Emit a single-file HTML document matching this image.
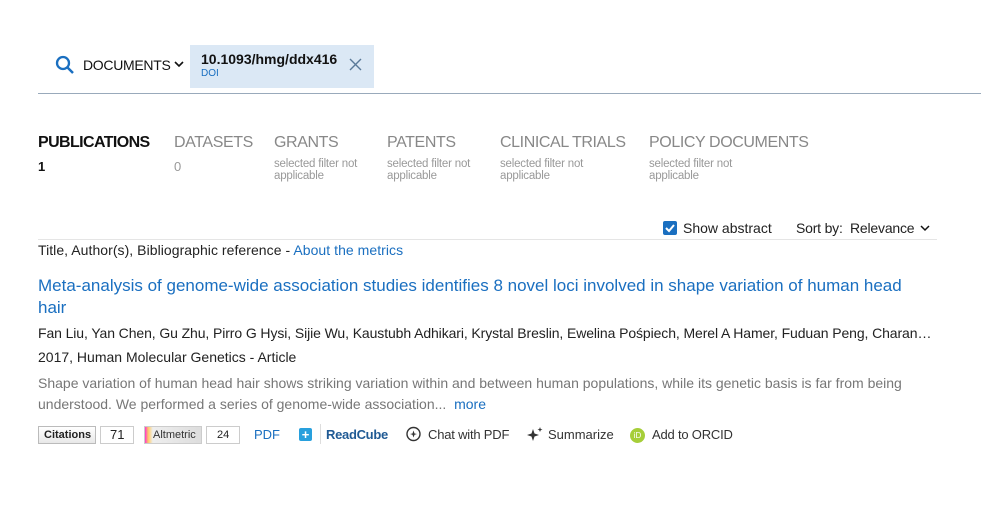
<!DOCTYPE html>
<html><head><meta charset="utf-8"><style>
*{margin:0;padding:0;box-sizing:border-box}
body{width:981px;height:505px;background:#fff;font-family:"Liberation Sans",sans-serif;color:#222;position:relative;overflow:hidden}
.a{position:absolute;white-space:nowrap}
.tab .t{font-size:16px;color:#888;letter-spacing:-0.4px}
.tab .n{font-size:13px;color:#999;margin-top:7px}
.tab .s{font-size:11.5px;color:#999;line-height:12px;margin-top:6px;letter-spacing:-0.2px}
.blue{color:#1a6fc0}
.ic{font-size:13px;color:#333}
</style></head><body>
<svg class="a" style="left:55px;top:55px" width="20" height="20" viewBox="0 0 20 20"><circle cx="8" cy="8" r="6" fill="none" stroke="#1a6fc0" stroke-width="2.3"/><line x1="12.5" y1="12.5" x2="18" y2="18" stroke="#1a6fc0" stroke-width="2.5"/></svg>
<div class="a" style="left:83px;top:57px;font-size:14px;color:#111;letter-spacing:-0.3px">DOCUMENTS</div>
<svg class="a" style="left:173px;top:60px" width="12" height="8"><path d="M2 2 L6 6 L10 2" fill="none" stroke="#111" stroke-width="1.6"/></svg>
<div class="a" style="left:190px;top:45px;width:184px;height:43px;background:#dbe8f5"></div>
<div class="a" style="left:201px;top:51px;font-size:14px;font-weight:bold;color:#111">10.1093/hmg/ddx416</div>
<div class="a" style="left:201px;top:68px;font-size:10px;color:#1a6fc0">DOI</div>
<svg class="a" style="left:349px;top:58px" width="13" height="13"><path d="M1 1L12 12M12 1L1 12" stroke="#5a7a99" stroke-width="1.4"/></svg>
<div class="a" style="left:38px;top:93px;width:943px;height:1px;background:#9ab"></div>

<div class="a tab" style="left:38px;top:134px"><div class="t" style="color:#111;font-weight:bold;letter-spacing:-0.6px">PUBLICATIONS</div><div class="n" style="color:#111;font-weight:bold">1</div></div>
<div class="a tab" style="left:174px;top:134px"><div class="t">DATASETS</div><div class="n">0</div></div>
<div class="a tab" style="left:274px;top:134px"><div class="t">GRANTS</div><div class="s">selected filter not<br>applicable</div></div>
<div class="a tab" style="left:387px;top:134px"><div class="t">PATENTS</div><div class="s">selected filter not<br>applicable</div></div>
<div class="a tab" style="left:500px;top:134px"><div class="t">CLINICAL TRIALS</div><div class="s">selected filter not<br>applicable</div></div>
<div class="a tab" style="left:649px;top:134px"><div class="t">POLICY DOCUMENTS</div><div class="s">selected filter not<br>applicable</div></div>

<div class="a" style="left:663px;top:221px;width:14px;height:14px;background:#1a6fc0;border-radius:2px"></div>
<svg class="a" style="left:663px;top:221px" width="14" height="14"><path d="M3 7L6 10L11 4" fill="none" stroke="#fff" stroke-width="2"/></svg>
<div class="a" style="left:683px;top:220px;font-size:14px">Show abstract</div>
<div class="a" style="left:796px;top:220px;font-size:14px;letter-spacing:-0.2px">Sort by:&nbsp; Relevance</div>
<svg class="a" style="left:919px;top:224px" width="12" height="8"><path d="M2 2L6 6L10 2" fill="none" stroke="#111" stroke-width="1.5"/></svg>
<div class="a" style="left:38px;top:239px;width:899px;height:1px;background:#e5e5e5"></div>
<div class="a" style="left:38px;top:242px;font-size:14px;letter-spacing:0.05px">Title, Author(s), Bibliographic reference - <span class="blue">About the metrics</span></div>

<div class="a blue" style="left:38px;top:275px;font-size:17px;line-height:22px;width:880px;white-space:normal">Meta-analysis of genome-wide association studies identifies 8 novel loci involved in shape variation of human head hair</div>
<div class="a" style="left:38px;top:325px;font-size:14px;width:899px;overflow:hidden;text-overflow:ellipsis;letter-spacing:-0.1px">Fan Liu, Yan Chen, Gu Zhu, Pirro G Hysi, Sijie Wu, Kaustubh Adhikari, Krystal Breslin, Ewelina Pośpiech, Merel A Hamer, Fuduan Peng, Charanya Muralidharan</div>
<div class="a" style="left:38px;top:349px;font-size:14px">2017, Human Molecular Genetics - Article</div>
<div class="a" style="left:38px;top:373px;font-size:14px;color:#777;line-height:21px;width:900px;white-space:normal">Shape variation of human head hair shows striking variation within and between human populations, while its genetic basis is far from being understood. We performed a series of genome-wide association... <span class="blue">&nbsp;more</span></div>

<div class="a" style="left:38px;top:426px;width:58px;height:18px;border:1px solid #bbb;background:linear-gradient(#fff,#e8e8e8);font-size:11px;font-weight:bold;line-height:16px;padding-left:5px;color:#222">Citations</div>
<div class="a" style="left:100px;top:426px;width:34px;height:18px;border:1px solid #ccc;font-size:13px;line-height:16px;padding-left:9px">71</div>
<div class="a" style="left:144px;top:426px;width:58px;height:18px;border:1px solid #ccc;background:linear-gradient(90deg,#f3c 0,#fc6 6%,#eee 14%,#ddd);font-size:11px;line-height:16px;padding-left:8px;color:#333">Altmetric</div>
<div class="a" style="left:206px;top:426px;width:34px;height:18px;border:1px solid #ccc;font-size:11px;line-height:16px;padding-left:10px">24</div>
<div class="a ic" style="left:254px;top:427px;color:#1a6fc0">PDF</div>
<div class="a" style="left:299px;top:428px;width:13px;height:13px;background:#28a0dd;border-radius:2px;color:#fff;font-size:13px;line-height:13px;text-align:center;font-weight:bold">+</div>
<div class="a" style="left:320px;top:424px;width:1px;height:20px;background:#ddd"></div>
<div class="a ic" style="left:326px;top:427px;color:#1f5a94;font-weight:bold;letter-spacing:-0.3px">ReadCube</div>
<svg class="a" style="left:405px;top:426px" width="17" height="17"><circle cx="8.5" cy="8" r="6.5" fill="none" stroke="#333" stroke-width="1.4"/><path d="M8.5 4.5L9.5 7.5L12 8L9.5 8.8L8.5 11.5L7.5 8.8L5 8L7.5 7.5Z" fill="#333"/></svg>
<div class="a ic" style="left:428px;top:427px;letter-spacing:-0.2px">Chat with PDF</div>
<svg class="a" style="left:526px;top:426px" width="18" height="17"><path d="M7 3L8.5 7.5L13 9L8.5 10.5L7 15L5.5 10.5L1 9L5.5 7.5Z M14 1L14.7 3L16.5 3.5L14.7 4.2L14 6L13.3 4.2L11.5 3.5L13.3 3Z" fill="#333"/></svg>
<div class="a ic" style="left:548px;top:427px">Summarize</div>
<div class="a" style="left:630px;top:428px;width:15px;height:15px;border-radius:50%;background:#a6ce39;color:#fff;font-size:8px;line-height:15px;text-align:center">iD</div>
<div class="a ic" style="left:652px;top:427px;letter-spacing:-0.2px">Add to ORCID</div>
</body></html>
